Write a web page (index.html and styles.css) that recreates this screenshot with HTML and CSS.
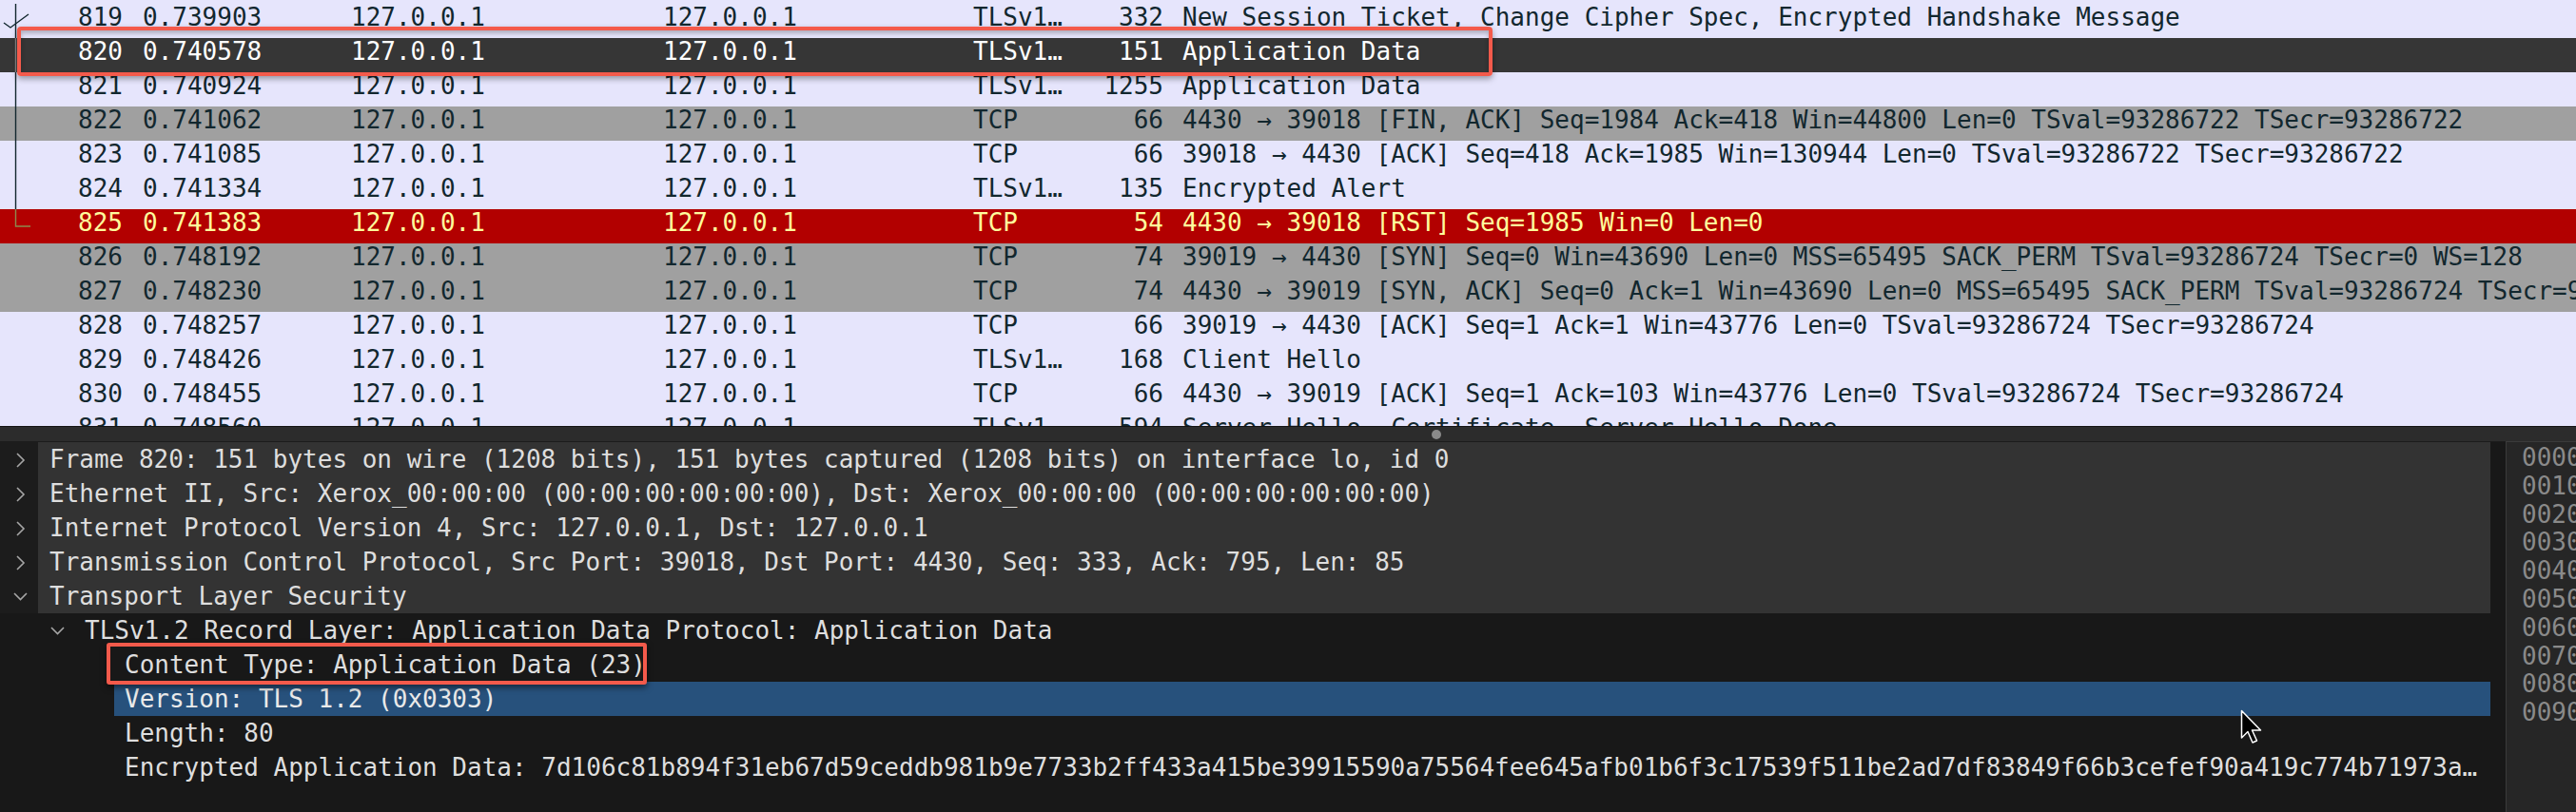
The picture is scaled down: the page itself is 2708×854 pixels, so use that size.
FILE: index.html
```html
<!DOCTYPE html>
<html>
<head>
<meta charset="utf-8">
<link rel="stylesheet" href="styles.css">
</head>
<body>
<div class="app">
  <div class="list">
    <div class="row lav">
      <span class="gut"><svg width="34" height="36" viewBox="0 0 34 36"><line x1="16.5" y1="0" x2="16.5" y2="36"/><polyline points="4,20 11,25 30,11" fill="none"/></svg></span>
      <span class="no">819</span><span class="time">0.739903</span><span class="src">127.0.0.1</span><span class="dst">127.0.0.1</span><span class="proto">TLSv1…</span><span class="len">332</span><span class="info">New Session Ticket, Change Cipher Spec, Encrypted Handshake Message</span>
    </div>
    <div class="row sel">
      <span class="gut"><svg width="34" height="36" viewBox="0 0 34 36"><line x1="16.5" y1="0" x2="16.5" y2="36"/></svg></span>
      <span class="no">820</span><span class="time">0.740578</span><span class="src">127.0.0.1</span><span class="dst">127.0.0.1</span><span class="proto">TLSv1…</span><span class="len">151</span><span class="info">Application Data</span>
      <span class="hl"></span>
    </div>
    <div class="row lav">
      <span class="gut"><svg width="34" height="36" viewBox="0 0 34 36"><line x1="16.5" y1="0" x2="16.5" y2="36"/></svg></span>
      <span class="no">821</span><span class="time">0.740924</span><span class="src">127.0.0.1</span><span class="dst">127.0.0.1</span><span class="proto">TLSv1…</span><span class="len">1255</span><span class="info">Application Data</span>
    </div>
    <div class="row grey">
      <span class="gut"><svg width="34" height="36" viewBox="0 0 34 36"><line x1="16.5" y1="0" x2="16.5" y2="36"/></svg></span>
      <span class="no">822</span><span class="time">0.741062</span><span class="src">127.0.0.1</span><span class="dst">127.0.0.1</span><span class="proto">TCP</span><span class="len">66</span><span class="info">4430 → 39018 [FIN, ACK] Seq=1984 Ack=418 Win=44800 Len=0 TSval=93286722 TSecr=93286722</span>
    </div>
    <div class="row lav">
      <span class="gut"><svg width="34" height="36" viewBox="0 0 34 36"><line x1="16.5" y1="0" x2="16.5" y2="36"/></svg></span>
      <span class="no">823</span><span class="time">0.741085</span><span class="src">127.0.0.1</span><span class="dst">127.0.0.1</span><span class="proto">TCP</span><span class="len">66</span><span class="info">39018 → 4430 [ACK] Seq=418 Ack=1985 Win=130944 Len=0 TSval=93286722 TSecr=93286722</span>
    </div>
    <div class="row lav">
      <span class="gut"><svg width="34" height="36" viewBox="0 0 34 36"><line x1="16.5" y1="0" x2="16.5" y2="36"/></svg></span>
      <span class="no">824</span><span class="time">0.741334</span><span class="src">127.0.0.1</span><span class="dst">127.0.0.1</span><span class="proto">TLSv1…</span><span class="len">135</span><span class="info">Encrypted Alert</span>
    </div>
    <div class="row red">
      <span class="gut"><svg width="34" height="36" viewBox="0 0 34 36"><polyline points="16.5,0 16.5,18 32,18" fill="none"/></svg></span>
      <span class="no">825</span><span class="time">0.741383</span><span class="src">127.0.0.1</span><span class="dst">127.0.0.1</span><span class="proto">TCP</span><span class="len">54</span><span class="info">4430 → 39018 [RST] Seq=1985 Win=0 Len=0</span>
    </div>
    <div class="row grey">
      <span class="gut"></span>
      <span class="no">826</span><span class="time">0.748192</span><span class="src">127.0.0.1</span><span class="dst">127.0.0.1</span><span class="proto">TCP</span><span class="len">74</span><span class="info">39019 → 4430 [SYN] Seq=0 Win=43690 Len=0 MSS=65495 SACK_PERM TSval=93286724 TSecr=0 WS=128</span>
    </div>
    <div class="row grey">
      <span class="gut"></span>
      <span class="no">827</span><span class="time">0.748230</span><span class="src">127.0.0.1</span><span class="dst">127.0.0.1</span><span class="proto">TCP</span><span class="len">74</span><span class="info">4430 → 39019 [SYN, ACK] Seq=0 Ack=1 Win=43690 Len=0 MSS=65495 SACK_PERM TSval=93286724 TSecr=93286724 WS=128</span>
    </div>
    <div class="row lav">
      <span class="gut"></span>
      <span class="no">828</span><span class="time">0.748257</span><span class="src">127.0.0.1</span><span class="dst">127.0.0.1</span><span class="proto">TCP</span><span class="len">66</span><span class="info">39019 → 4430 [ACK] Seq=1 Ack=1 Win=43776 Len=0 TSval=93286724 TSecr=93286724</span>
    </div>
    <div class="row lav">
      <span class="gut"></span>
      <span class="no">829</span><span class="time">0.748426</span><span class="src">127.0.0.1</span><span class="dst">127.0.0.1</span><span class="proto">TLSv1…</span><span class="len">168</span><span class="info">Client Hello</span>
    </div>
    <div class="row lav">
      <span class="gut"></span>
      <span class="no">830</span><span class="time">0.748455</span><span class="src">127.0.0.1</span><span class="dst">127.0.0.1</span><span class="proto">TCP</span><span class="len">66</span><span class="info">4430 → 39019 [ACK] Seq=1 Ack=103 Win=43776 Len=0 TSval=93286724 TSecr=93286724</span>
    </div>
    <div class="row lav">
      <span class="gut"></span>
      <span class="no">831</span><span class="time">0.748560</span><span class="src">127.0.0.1</span><span class="dst">127.0.0.1</span><span class="proto">TLSv1…</span><span class="len">594</span><span class="info">Server Hello, Certificate, Server Hello Done</span>
    </div>
  </div>

  <div class="splitter"><span class="dot"></span></div>

  <div class="details">
    <div class="tree">
      <div class="trow top">
        <span class="tw"><svg width="40" height="36" viewBox="0 0 40 36"><polyline points="18,12 25,19 18,26"/></svg></span>
        <span class="lbl">Frame 820: 151 bytes on wire (1208 bits), 151 bytes captured (1208 bits) on interface lo, id 0</span>
      </div>
      <div class="trow top">
        <span class="tw"><svg width="40" height="36" viewBox="0 0 40 36"><polyline points="18,12 25,19 18,26"/></svg></span>
        <span class="lbl">Ethernet II, Src: Xerox_00:00:00 (00:00:00:00:00:00), Dst: Xerox_00:00:00 (00:00:00:00:00:00)</span>
      </div>
      <div class="trow top">
        <span class="tw"><svg width="40" height="36" viewBox="0 0 40 36"><polyline points="18,12 25,19 18,26"/></svg></span>
        <span class="lbl">Internet Protocol Version 4, Src: 127.0.0.1, Dst: 127.0.0.1</span>
      </div>
      <div class="trow top">
        <span class="tw"><svg width="40" height="36" viewBox="0 0 40 36"><polyline points="18,12 25,19 18,26"/></svg></span>
        <span class="lbl">Transmission Control Protocol, Src Port: 39018, Dst Port: 4430, Seq: 333, Ack: 795, Len: 85</span>
      </div>
      <div class="trow top">
        <span class="tw"><svg width="40" height="36" viewBox="0 0 40 36"><polyline points="15,15 21.5,21.5 28,15"/></svg></span>
        <span class="lbl">Transport Layer Security</span>
      </div>
      <div class="trow child">
        <span class="tw2"><svg width="80" height="36" viewBox="0 0 80 36"><polyline points="54,15 60.5,21.5 67,15"/></svg></span>
        <span class="lbl">TLSv1.2 Record Layer: Application Data Protocol: Application Data</span>
      </div>
      <div class="trow leaf">
        <span class="lbl">Content Type: Application Data (23)</span>
        <span class="hl2"></span>
      </div>
      <div class="trow leaf sel">
        <span class="lbl">Version: TLS 1.2 (0x0303)</span>
      </div>
      <div class="trow leaf">
        <span class="lbl">Length: 80</span>
      </div>
      <div class="trow leaf">
        <span class="lbl">Encrypted Application Data: 7d106c81b894f31eb67d59ceddb981b9e7733b2ff433a415be39915590a75564fee645afb01b6f3c17539f511be2ad7df83849f66b3cefef90a419c774b71973a…</span>
      </div>
    </div>
    <div class="hex">
      <div>0000</div><div>0010</div><div>0020</div><div>0030</div><div>0040</div>
      <div>0050</div><div>0060</div><div>0070</div><div>0080</div><div>0090</div>
    </div>
  </div>

  <svg class="cursor" width="24" height="38" viewBox="0 0 24 38"><path d="M1.5 1.5 L1.5 30 L8 23.5 L13 35 L17.5 33 L12.5 22 L21.5 22 Z"/></svg>
</div>
</body>
</html>
```

FILE: styles.css
```css
html, body {
  margin: 0;
  padding: 0;
}
body {
  background: #181818;
  font-family: "DejaVu Sans Mono", "Liberation Mono", monospace;
}
.app {
  position: relative;
  width: 2708px;
  height: 854px;
  overflow: hidden;
}

/* packet list */
.list {
  height: 448px;
  box-sizing: border-box;
  padding-top: 4px;
  background: #e6e5fc;
  overflow: hidden;
}
.row {
  position: relative;
  display: grid;
  grid-template-columns: 34px 104px 222px 328px 326px 136px 82px minmax(0, 1fr);
  height: 36px;
  font-size: 26px;
  line-height: 29px;
  color: #12272e;
  white-space: nowrap;
}
.row.lav { background: #e6e5fc; }
.row.grey { background: #a0a0a0; }
.row.red { background: #b20000; color: #fffc9c; }
.row.sel { background: #363636; color: #ffffff; }
.gut { color: #12272e; }
.gut svg { display: block; }
.gut svg line, .gut svg polyline { stroke: currentColor; stroke-width: 1.4; }
.row.sel .gut { color: #8a8a8a; }
.row.red .gut { color: #8d8a4e; }
.no { text-align: right; padding-right: 9px; }
.time { padding-left: 12px; }
.src, .dst, .proto { padding-left: 9px; }
.len { text-align: right; padding-right: 9px; }
.info { padding-left: 11px; }
.row > .hl {
  position: absolute;
  z-index: 2;
  left: 18px;
  top: -12px;
  width: 1551px;
  height: 52px;
  box-sizing: border-box;
  border: 4px solid #f45a4b;
  border-radius: 4px;
  box-shadow: 0 3px 6px rgba(0, 0, 0, 0.35), inset 0 3px 5px rgba(0, 0, 0, 0.25);
}

/* splitter */
.splitter {
  height: 17px;
  box-sizing: border-box;
  background: #2c2c2c;
  border-top: 1px solid #141414;
  border-bottom: 1px solid #1c1c1c;
  display: flex;
  align-items: center;
  padding-left: 1505px;
}
.dot {
  width: 10px;
  height: 10px;
  border-radius: 50%;
  background: #8a8a8a;
}

/* details */
.details {
  display: flex;
  gap: 16px;
  height: 389px;
}
.tree {
  width: 2618px;
  flex: none;
  background: #181818;
  font-size: 26px;
  color: #dedede;
  white-space: nowrap;
  overflow: hidden;
}
.trow {
  position: relative;
  display: flex;
  height: 36px;
  line-height: 36px;
}
.trow svg { display: block; }
.trow svg polyline { fill: none; stroke: #a6a6a6; stroke-width: 1.6; }
.tw { width: 40px; flex: none; background: #1c1c1c; }
.top .lbl { flex: 1; background: #333333; padding-left: 12px; }
.tw2 { width: 80px; flex: none; }
.child .lbl { padding-left: 9px; }
.leaf { margin-left: 120px; }
.leaf .lbl { padding-left: 11px; }
.leaf.sel { background: #27517c; color: #eaeaea; }
.hl2 {
  position: absolute;
  z-index: 2;
  left: -8px;
  top: -5px;
  width: 568px;
  height: 44px;
  box-sizing: border-box;
  border: 4px solid #f45a4b;
  border-radius: 3px;
  box-shadow: 0 3px 6px rgba(0, 0, 0, 0.5);
}

.hex {
  flex: 1;
  margin-top: -1px;
  background: #262626;
  border-left: 1px solid #3a3a3a;
  border-top: 1px solid #3a3a3a;
  padding: 2px 0 0 16px;
  font-size: 26px;
  line-height: 29.8px;
  color: #8a8a8a;
  white-space: nowrap;
  overflow: hidden;
}

.cursor {
  position: absolute;
  left: 2355px;
  top: 746px;
}
.cursor path { fill: #000; stroke: #fff; stroke-width: 1.5; stroke-linejoin: round; }
```
